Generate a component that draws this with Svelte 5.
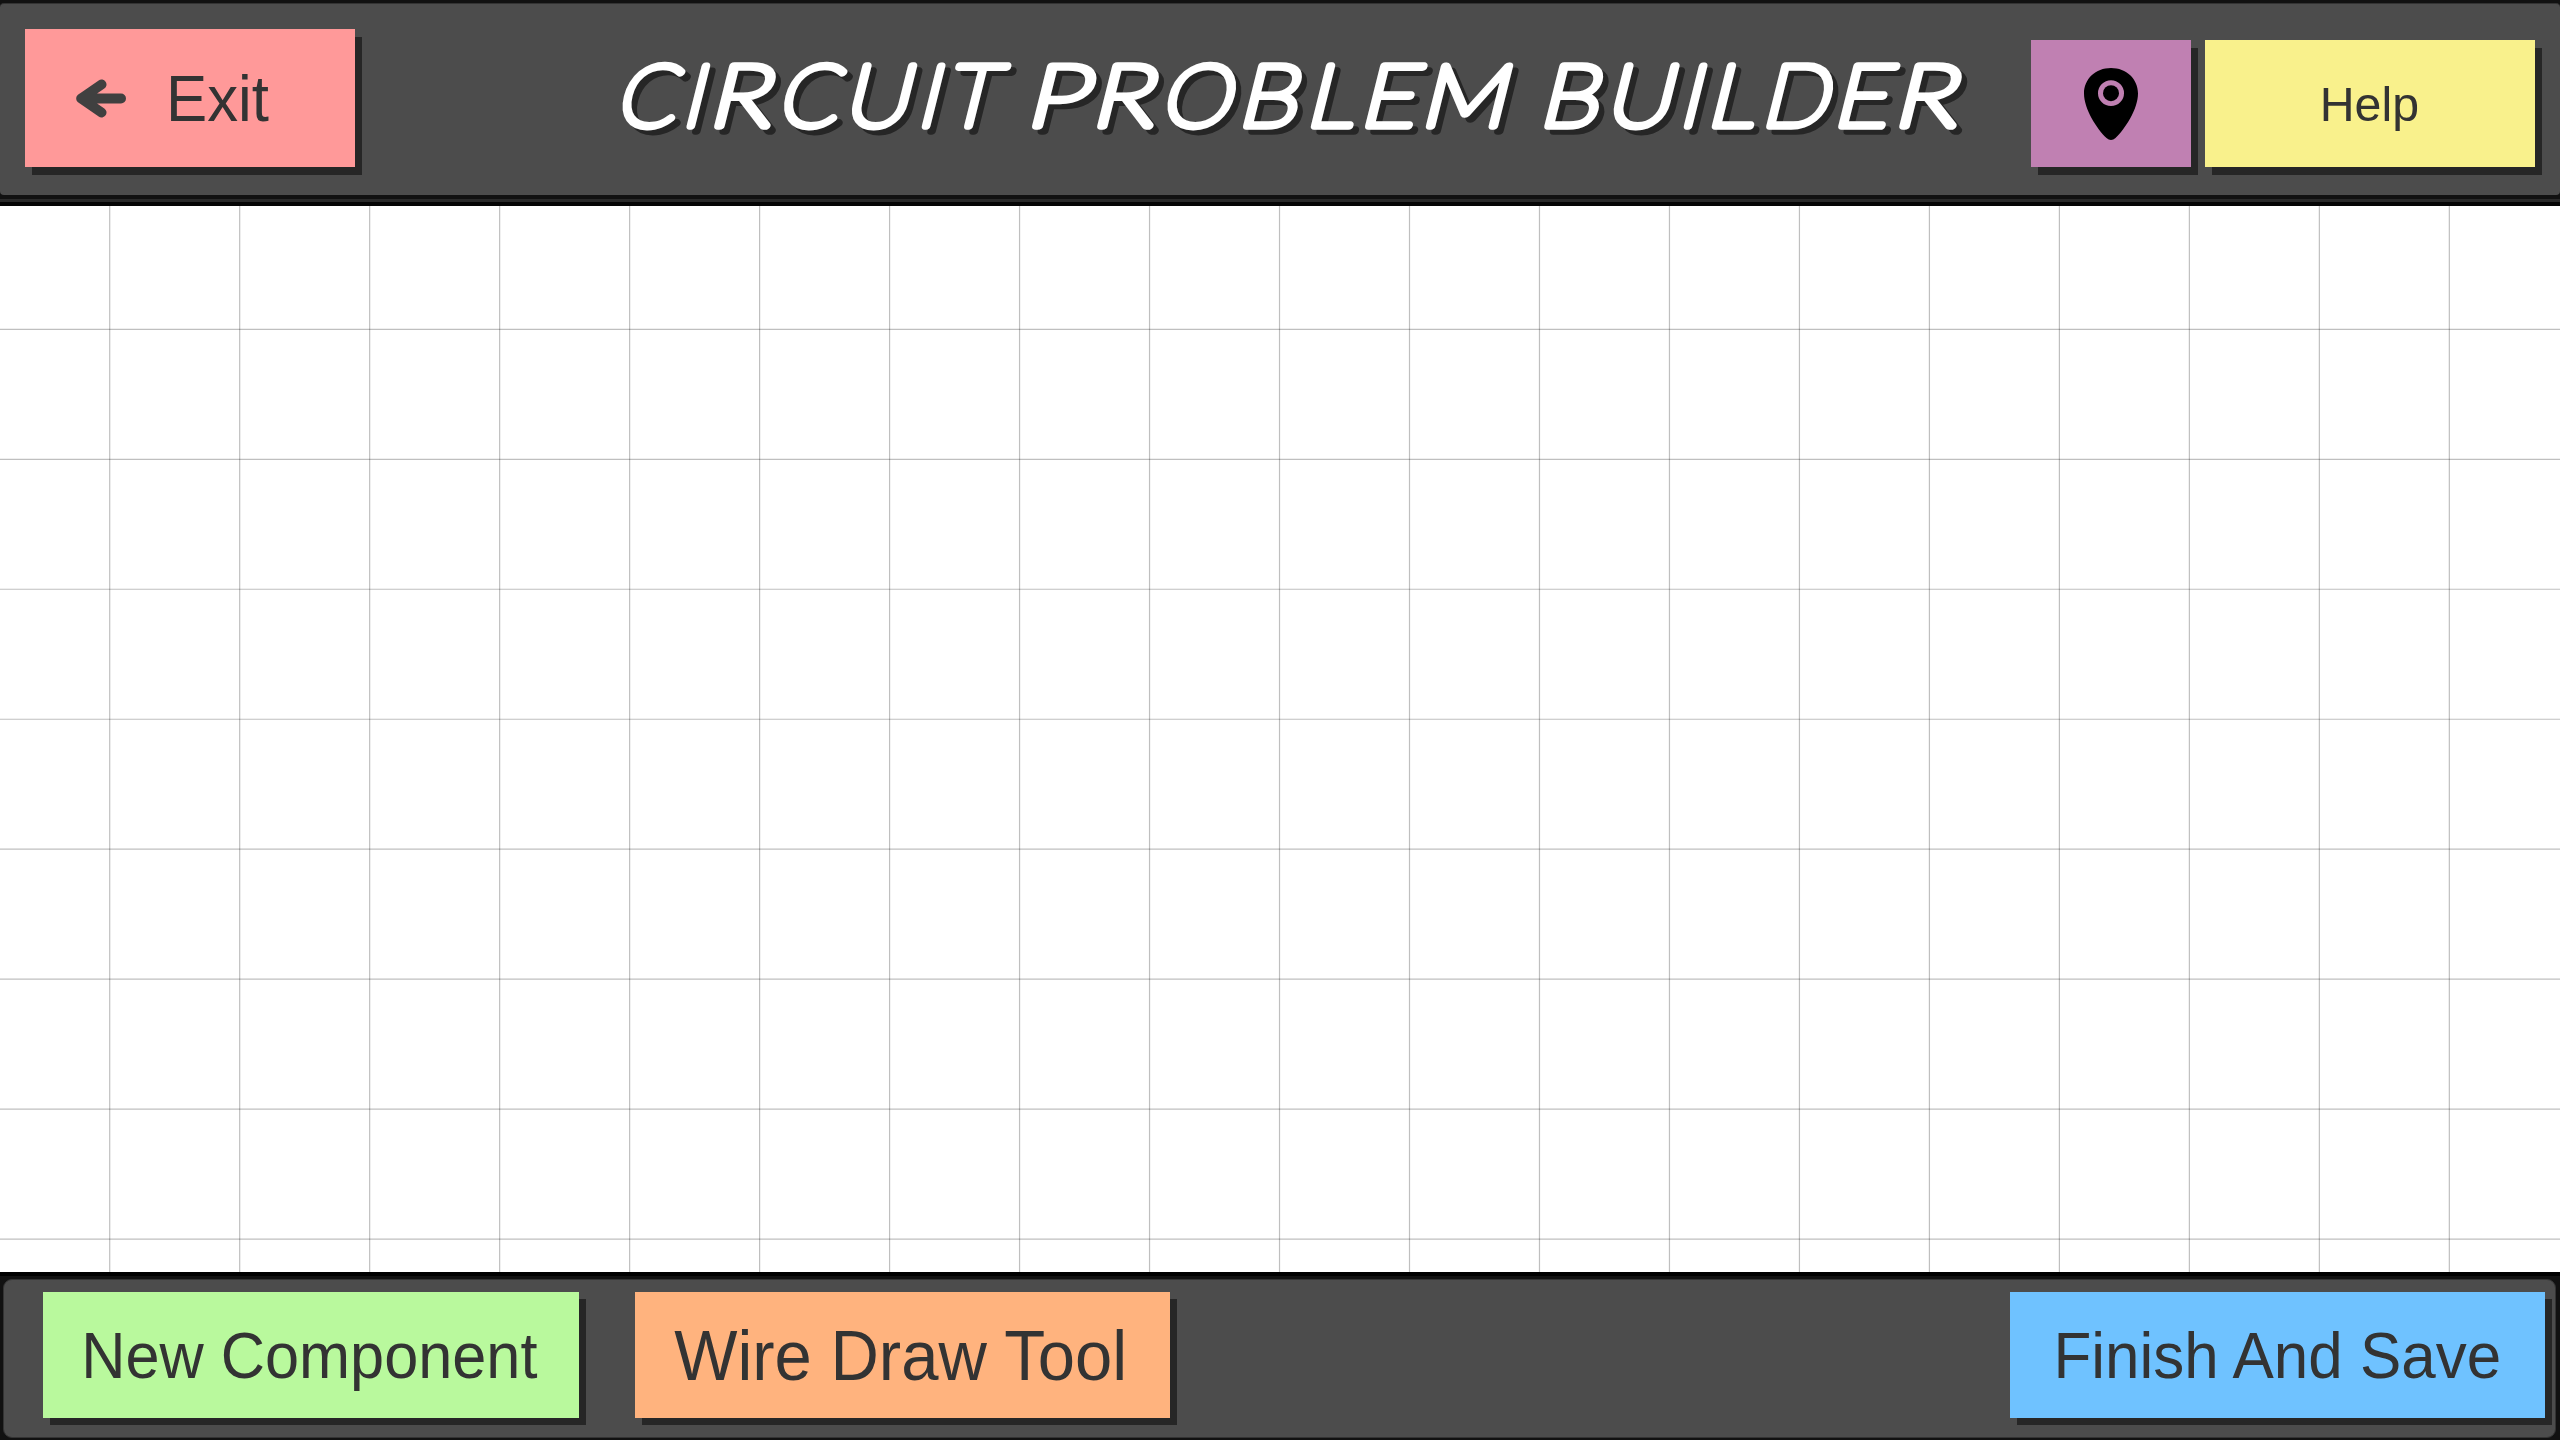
<script>
  const tools = [
    { label: 'New Component', kind: 'component' },
    { label: 'Wire Draw Tool', kind: 'wire' }
  ];
  const vertical = Array.from({ length: 19 }, (_, i) => 109.7 + i * 129.98);
  const horizontal = Array.from({ length: 8 }, (_, i) => 123.3 + i * 129.98);

  // Title lettering: each glyph is fitted between its left and right edge.
  const SIZE = 85.5;
  const STROKE = 7.6;
  const WEIGHT = 100;
  const slots = [
    ['C', 14.7, 72.3], ['I', 85.3, 93.8], ['R', 112, 170], ['C', 176.3, 234.4], ['U', 246, 301.8],
    ['I', 320, 329.5], ['T', 339.3, 396], ['P', 430, 484.6], ['R', 495, 553], ['O', 559.4, 627],
    ['B', 641, 693], ['L', 709, 753], ['E', 763, 811.7], ['M', 824, 898.2], ['B', 942.4, 994.4],
    ['U', 1008, 1064.3], ['I', 1082, 1091.5], ['L', 1109.8, 1153.5], ['D', 1164.3, 1223.3],
    ['E', 1236.2, 1284.5], ['R', 1297.3, 1356.3]
  ];
  const pen = document.createElement('canvas').getContext('2d');
  pen.font = `${WEIGHT} ${SIZE}px Lato`;
  const letters = slots.map(([char, left, right]) => {
    const ink = pen.measureText(char);
    const width = ink.actualBoundingBoxRight + ink.actualBoundingBoxLeft + STROKE;
    const scale = char === 'I' ? 1 : (right - left) / width;
    const shift = (left + right) / 2 - scale * (ink.actualBoundingBoxRight - ink.actualBoundingBoxLeft) / 2;
    return { char, transform: `translate(${shift.toFixed(2)} 0) scale(${scale.toFixed(3)} 1)` };
  });
</script>

<div class="app">
  <header>
    <div class="panel top">
      <button class="exit">
        <svg class="arrow" viewBox="0 0 50 39" width="50" height="39">
          <path d="M25.5 5.5 L5.2 19.5 L25.5 33.5 M5.2 19.5 H45" />
        </svg>
        <span class="label">Exit</span>
      </button>
      <svg class="title" width="1400" height="110" viewBox="0 0 1400 110" role="img" aria-label="Circuit Problem Builder">
        {#each ['translate(5.4 89.5) skewX(-14)', 'translate(0 85.2) skewX(-14)'] as layer, i}
          <g transform={layer} class:shade={i === 0}>
            {#each letters as letter}
              <text font-size={SIZE} font-weight={WEIGHT} stroke-width={STROKE} transform={letter.transform}>{letter.char}</text>
            {/each}
          </g>
        {/each}
      </svg>
      <button class="pin" aria-label="Location">
        <svg viewBox="0 0 54 72" width="54" height="72">
          <path fill-rule="evenodd" d="M27 0C11.5 0 0 11 0 25.5C0 41 13 61 22.5 70Q27 74 31.5 70C41 61 54 41 54 25.5C54 11 42.5 0 27 0ZM27 12.3A13 12.9 0 1 1 27 38.1A13 12.9 0 1 1 27 12.3Z" />
          <ellipse cx="27" cy="25.2" rx="8" ry="8" />
        </svg>
      </button>
      <button class="help"><span class="label">Help</span></button>
    </div>
  </header>

  <main>
    <svg width="2560" height="1066">
      {#each horizontal as y}<line x1="0" x2="2560" y1={y} y2={y} />{/each}
      {#each vertical as x}<line x1={x} x2={x} y1="0" y2="1066" />{/each}
    </svg>
  </main>

  <footer>
    <div class="panel bottom">
      {#each tools as tool}
        <button class={tool.kind}><span class="label">{tool.label}</span></button>
      {/each}
      <button class="finish"><span class="label">Finish And Save</span></button>
    </div>
  </footer>
</div>

<style>
  :global(body) { margin: 0; overflow: hidden; }
  .app { width: 2560px; height: 1440px; display: flex; flex-direction: column; background: #fff; }
  header {
    height: 206px; box-sizing: border-box; padding-top: 3px;
    background: linear-gradient(#111 0 199px, #2a2a2a 199px 202px, #050505 202px);
  }
  .panel { box-sizing: border-box; background: #4c4c4c; display: flex; align-items: flex-start; }
  .top { height: 192px; padding: 25px 25px 0; border-top: 1px solid #333; border-radius: 4px; }
  button {
    margin: 0; padding: 0; border: 0; border-radius: 0; flex: none;
    display: flex; align-items: center; justify-content: center;
    font-family: "Liberation Sans", Arial, sans-serif; color: #333; white-space: nowrap;
    box-shadow: 7px 7px 0 #262626;
  }
  .label { display: block; transform: translate(-2px, 1px) scaleX(.957); }
  .exit { width: 330px; height: 138px; background: #ff9999; justify-content: flex-start; padding-left: 51px; box-sizing: border-box; font-size: 64px; box-shadow: 7px 8px 0 #262626; }
  .arrow { fill: none; stroke: #404040; stroke-width: 10; stroke-linecap: round; stroke-linejoin: round; }
  .exit .label { margin-left: 40px; transform: translate(0, 1px) scaleX(.965); transform-origin: left; }
  .title { margin: 12px 0 0 246px; overflow: visible; flex: none; }
  .title text { font-family: Lato, sans-serif; fill: #fff; stroke: #fff; stroke-linejoin: round; }
  .title .shade text { fill: #262626; stroke: #262626; }
  .pin { width: 160px; height: 127px; margin: 11px 0 0 auto; background: #c080b2; box-shadow: 7px 8px 0 #262626; }
  .help { width: 330px; height: 127px; margin: 11px 0 0 14px; background: #f9f18c; font-size: 49px; box-shadow: 7px 8px 0 #262626; }
  .help .label { transform: translateX(-1px) scaleX(.985); }
  main { height: 1066px; }
  main svg { display: block; }
  line { stroke: #000; stroke-opacity: .25; stroke-width: 1.2; }
  footer { height: 168px; box-sizing: border-box; padding: 7px 4px 2px 3px; background: linear-gradient(#000 0 4px, #111 4px); }
  .bottom { height: 159px; border: 1px solid #333; border-radius: 9px; padding: 12px 10px 0 39px; }
  .bottom button { width: 535px; height: 126px; font-size: 64px; }
  .bottom .component { background: #b9f99d; width: 536px; }
  .bottom .wire { background: #ffb37e; margin-left: 56px; font-size: 70px; }
  .bottom .finish { background: #6fc2ff; margin-left: auto; }
  .finish .label { transform: translateY(1px) scaleX(.968); }
</style>
